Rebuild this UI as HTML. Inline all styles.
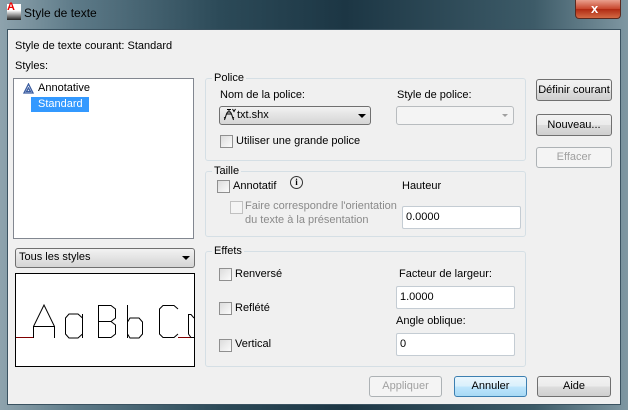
<!DOCTYPE html>
<html><head><meta charset="utf-8"><style>
*{margin:0;padding:0;box-sizing:border-box}
body{width:628px;height:410px;overflow:hidden;background:#1d3440;font-family:"Liberation Sans",sans-serif;font-size:11px;color:#000;position:relative}
.a{position:absolute}
.frame{left:0;top:0;width:628px;height:410px;background:linear-gradient(90deg,#8ea3ad 0%,#5d7a88 12%,#2c4a58 35%,#1c3644 55%,#3d5b68 85%,#7f97a2 100%)}
.client{left:7px;top:29px;width:614px;height:376px;background:#f0f0f0;border:1px solid #3a5260}
.t{position:absolute;white-space:nowrap;line-height:13px}
.grp{position:absolute;border:1px solid #d5dfe5;border-radius:3px}
.gt{position:absolute;background:#f0f0f0;padding:0 2px;line-height:12px}
.cb{position:absolute;width:13px;height:13px;border:1px solid #8f8f8f;background:linear-gradient(135deg,#dcdcdc,#fbfbfb)}
.inp{position:absolute;background:#fff;border:1px solid #c4ccd3;border-radius:2px;padding:3px 3px;line-height:14px}
.btn{position:absolute;border:1px solid #707070;border-radius:3px;background:linear-gradient(#f2f2f2 0%,#ebebeb 50%,#dddddd 51%,#cfcfcf 100%);text-align:center;line-height:18px}
.dis{border-color:#adb2b5;background:#f4f4f4;color:#a0a0a0}
</style></head><body>
<div class="a frame"></div>
<div class="a" style="left:7px;top:4px;width:14px;height:16px;background:linear-gradient(#fff 40%,#222)"></div>
<div class="t" style="left:7px;top:1px;color:#e00;font-weight:bold;font-size:11px">A</div>
<div class="t" style="left:24px;top:6px;font-size:12px;line-height:15px;color:#000">Style de texte</div>
<div class="a" style="left:575px;top:0;width:46px;height:19px;border:1px solid #5a2a20;border-top:none;border-radius:0 0 4px 4px;background:linear-gradient(#e9a08e,#c7452a 50%,#b02a12 51%,#d36a45)"></div>
<div class="t" style="left:591px;top:2px;color:#fff;font-weight:bold;font-size:13px">x</div>
<div class="a client"></div>

<div class="t" style="left:15px;top:40px">Style de texte courant: Standard</div>
<div class="t" style="left:15px;top:60px">Styles:</div>
<div class="a" style="left:13px;top:78px;width:181px;height:161px;background:#fff;border:1px solid #828790"></div>
<svg class="a" style="left:23px;top:83px" width="11" height="11" fill="none" stroke="#3a5ca0" stroke-width="1.3"><path d="M5.5 1L1 10H10Z M5.5 5L3.5 8.5H7.5Z"/></svg>
<div class="t" style="left:38px;top:82px">Annotative</div>
<div class="a" style="left:31px;top:97px;width:58px;height:15px;background:#3399ff"></div>
<div class="t" style="left:38px;top:98px;color:#fff">Standard</div>

<div class="a" style="left:15px;top:248px;width:180px;height:20px;border:1px solid #707070;border-radius:3px;background:linear-gradient(#f2f2f2,#e3e3e3 50%,#d5d5d5)"></div>
<div class="t" style="left:19px;top:251px">Tous les styles</div>
<div class="a" style="left:182px;top:256px;border-left:4px solid transparent;border-right:4px solid transparent;border-top:4px solid #000"></div>

<div class="a" style="left:15px;top:273px;width:180px;height:94px;background:#fff;border:1px solid #000;overflow:hidden">
<svg width="178" height="92" style="position:absolute;left:0;top:0" fill="none" stroke="#000" stroke-width="1">
<path d="M0 63.5H17" stroke="#800000"/>
<path d="M162 63.5H178" stroke="#800000"/>
<path d="M17.5 64V52.5H38.5V64M17.5 52.5L28 31L38.5 52.5"/>
<path d="M66.5 40V64M66.5 44L62 40H53L49.5 44V60L53 64H62L66.5 60" />
<path d="M82.5 31V64M82.5 31.5H95L99.5 35V44L95 47.5H82.5M95 47.5L99.5 51V60L95 63.5H82.5"/>
<path d="M111.5 31V64M111.5 48L114 44H123L126.5 48V60L123 64H114L111.5 60"/>
<path d="M162 35L158 31.5H147L143.5 35V60L147 63.5H158L162 60"/>
<path d="M178 44L175 40.5H172.5V60L175 63.5H178"/>
</svg></div>

<div class="grp" style="left:205px;top:78px;width:321px;height:83px"></div>
<div class="gt" style="left:212px;top:72px">Police</div>
<div class="t" style="left:220px;top:89px">Nom de la police:</div>
<div class="a" style="left:219px;top:106px;width:152px;height:19px;border:1px solid #707070;border-radius:3px;background:linear-gradient(#f2f2f2,#e3e3e3 50%,#d5d5d5)"></div>
<svg class="a" style="left:223px;top:108px" width="13" height="14" fill="none" stroke="#000" stroke-width="1"><path d="M4 1.5H8M6 1.5V4M4.5 4H7.5L8.5 6H3.5ZM3.5 6L1.5 12M8.5 6L10.5 12M1 10L3 9M11 10L9 9M9.5 1L11 3.5L12.5 1"/></svg>
<div class="t" style="left:237px;top:109px">txt.shx</div>
<div class="a" style="left:358px;top:114px;border-left:4px solid transparent;border-right:4px solid transparent;border-top:4px solid #000"></div>
<div class="t" style="left:397px;top:89px">Style de police:</div>
<div class="a" style="left:396px;top:106px;width:118px;height:19px;border:1px solid #b8bcbf;border-radius:3px;background:#f4f4f4"></div>
<div class="a" style="left:502px;top:114px;border-left:3px solid transparent;border-right:3px solid transparent;border-top:3px solid #a0a0a0"></div>
<div class="cb" style="left:220px;top:135px"></div>
<div class="t" style="left:236px;top:135px">Utiliser une grande police</div>

<div class="grp" style="left:205px;top:171px;width:321px;height:66px"></div>
<div class="gt" style="left:212px;top:165px">Taille</div>
<div class="cb" style="left:217px;top:180px"></div>
<div class="t" style="left:233px;top:180px">Annotatif</div>
<div class="a" style="left:290px;top:176px;width:13px;height:13px;border:1px solid #333;border-radius:50%;font-size:9px;font-weight:bold;text-align:center;line-height:11px;font-family:'Liberation Serif',serif">i</div>
<div class="t" style="left:402px;top:180px">Hauteur</div>
<div class="cb" style="left:230px;top:201px;border-color:#c0c0c0;background:#f4f4f4"></div>
<div class="t" style="left:245px;top:200px;color:#8a8a8a">Faire correspondre l'orientation</div>
<div class="t" style="left:245px;top:214px;color:#8a8a8a">du texte à la présentation</div>
<div class="inp" style="left:402px;top:206px;width:119px;height:23px">0.0000</div>

<div class="grp" style="left:205px;top:251px;width:321px;height:116px"></div>
<div class="gt" style="left:212px;top:245px">Effets</div>
<div class="cb" style="left:219px;top:268px"></div>
<div class="t" style="left:235px;top:268px">Renversé</div>
<div class="cb" style="left:219px;top:302px"></div>
<div class="t" style="left:235px;top:302px">Reflété</div>
<div class="cb" style="left:219px;top:339px"></div>
<div class="t" style="left:235px;top:338px">Vertical</div>
<div class="t" style="left:399px;top:268px">Facteur de largeur:</div>
<div class="inp" style="left:396px;top:286px;width:119px;height:23px">1.0000</div>
<div class="t" style="left:396px;top:315px">Angle oblique:</div>
<div class="inp" style="left:396px;top:333px;width:119px;height:23px">0</div>

<div class="btn" style="left:536px;top:79px;width:76px;height:22px;line-height:20px">Définir courant</div>
<div class="btn" style="left:536px;top:114px;width:76px;height:22px;line-height:20px">Nouveau...</div>
<div class="btn dis" style="left:536px;top:147px;width:76px;height:21px;line-height:19px">Effacer</div>

<div class="btn dis" style="left:369px;top:376px;width:73px;height:21px;line-height:19px">Appliquer</div>
<div class="btn" style="left:454px;top:376px;width:73px;height:21px;line-height:19px;border-color:#3c7fb1;background:linear-gradient(#eaf6fd,#d9f0fc 50%,#bee6fd 51%,#a7d9f5)">Annuler</div>
<div class="btn" style="left:537px;top:376px;width:74px;height:21px;line-height:19px">Aide</div>
</body></html>
